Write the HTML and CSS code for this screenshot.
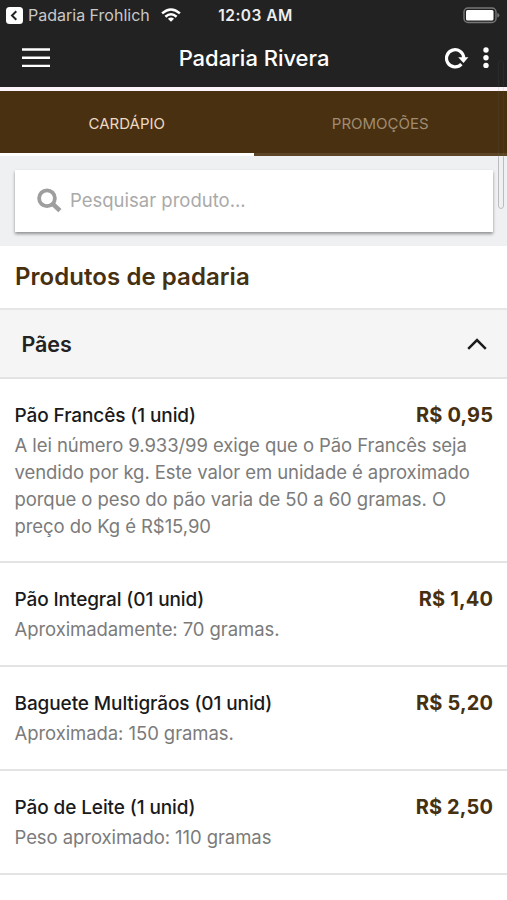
FILE: index.html
```html
<!DOCTYPE html>
<html lang="pt-BR">
<head>
<meta charset="utf-8">
<title>Padaria Rivera</title>
<link rel="stylesheet" href="styles.css">
</head>
<body>
<div class="status">
  <div class="back">
    <svg width="17" height="17" viewBox="0 0 17 17"><rect width="17" height="17" rx="3.5" fill="#fff"/><path d="M10.3 4.2 6 8.5l4.3 4.3" fill="none" stroke="#222" stroke-width="2"/></svg>
    <span class="back-label">Padaria Frohlich</span>
    <svg class="wifi" width="20" height="14" viewBox="0 0 20 14"><g fill="none" stroke="#fff" stroke-width="2.5"><path d="M1.1 5.4Q10-2.4 18.9 5.4"/><path d="M4.4 8.7Q10 3.8 15.6 8.7"/></g><path d="M6.9 10.7Q10 8.2 13.1 10.7L10 13.8Z" fill="#fff"/></svg>
  </div>
  <span class="clock">12:03 AM</span>
  <svg class="battery" width="37" height="17" viewBox="0 0 37 17"><rect x="1" y="1" width="32" height="14.5" rx="4" fill="none" stroke="#777" stroke-width="1.4"/><rect x="3" y="3" width="27.5" height="10.5" rx="1.5" fill="#fff"/><path d="M34.3 6q2 .5 2 2.2t-2 2.3Z" fill="#777"/></svg>
</div>
<header class="bar">
  <svg width="28" height="20" viewBox="0 0 28 20"><path d="M0 1.5h28M0 9.7h28M0 17.9h28" stroke="#fff" stroke-width="2.4"/></svg>
  <h1 class="app-title">Padaria Rivera</h1>
  <div class="actions">
    <svg width="24" height="22" viewBox="0 0 24 22"><path d="M16.4 17.2A8.6 8.6 0 1 1 18.7 11" fill="none" stroke="#fff" stroke-width="3.2"/><path d="M13.2 10.2h10.2L18.5 15.9Z" fill="#fff"/></svg>
    <svg class="dots" width="6" height="22" viewBox="0 0 6 22"><g fill="#fff"><circle cx="3" cy="3" r="2.7"/><circle cx="3" cy="10.7" r="2.7"/><circle cx="3" cy="18.4" r="2.7"/></g></svg>
  </div>
</header>
<nav class="tabs">
  <a class="tab active">CARDÁPIO</a>
  <a class="tab">PROMOÇÕES</a>
</nav>
<div class="scrollbar"></div>
<section class="search">
  <div class="field">
    <svg width="25" height="25" viewBox="0 0 25 25"><circle cx="10" cy="10.3" r="7.9" fill="none" stroke="#9e9e9e" stroke-width="3.8"/><path d="M15.5 15.6l7.4 7" stroke="#9e9e9e" stroke-width="4.6"/></svg>
    <span class="placeholder">Pesquisar produto...</span>
  </div>
</section>
<h2 class="category">Produtos de padaria</h2>
<div class="group">
  <h3 class="group-name">Pães</h3>
  <svg width="20" height="12" viewBox="0 0 20 12"><path d="M1.2 10.8 10 2l8.8 8.8" fill="none" stroke="#1b1b1b" stroke-width="2.5"/></svg>
</div>
<main>
  <article class="item">
    <div class="row"><span class="name">Pão Francês (1 unid)</span><span class="price">R$ 0,95</span></div>
    <p class="desc">A lei número 9.933/99 exige que o Pão Francês seja<br>vendido por kg. Este valor em unidade é aproximado<br>porque o peso do pão varia de 50 a 60 gramas. O<br>preço do Kg é R$15,90</p>
  </article>
  <article class="item">
    <div class="row"><span class="name">Pão Integral (01 unid)</span><span class="price">R$ 1,40</span></div>
    <p class="desc">Aproximadamente: 70 gramas.</p>
  </article>
  <article class="item">
    <div class="row"><span class="name">Baguete Multigrãos (01 unid)</span><span class="price">R$ 5,20</span></div>
    <p class="desc">Aproximada: 150 gramas.</p>
  </article>
  <article class="item">
    <div class="row"><span class="name">Pão de Leite (1 unid)</span><span class="price">R$ 2,50</span></div>
    <p class="desc">Peso aproximado: 110 gramas</p>
  </article>
</main>
</body>
</html>
```

FILE: styles.css
```css
* { box-sizing: border-box; }
body {
  margin: 0;
  width: 507px;
  height: 900px;
  overflow: hidden;
  position: relative;
  background: #fff;
  font-family: Inter, "Liberation Sans", sans-serif;
}
svg { display: block; flex: none; }
h1, h2, h3, p { margin: 0; }
.status {
  display: grid;
  grid-template-columns: 1fr auto 1fr;
  align-items: center;
  height: 30px;
  padding: 0 7px 0 6px;
  background: #222;
  color: #fff;
}
.back { display: flex; align-items: center; }
.back-label { margin-left: 5px; font-size: 16px; color: #c9c9c9; white-space: nowrap; }
.wifi { margin-left: 11px; }
.clock { margin-left: 5px; font-size: 15.5px; font-weight: 600; letter-spacing: 0.45px; color: #eee; }
.battery { justify-self: end; }
.bar {
  display: grid;
  grid-template-columns: 1fr auto 1fr;
  align-items: center;
  height: 57px;
  padding: 0 18px 2px 22px;
  background: #222;
}
.app-title { color: #fff; font-size: 22px; line-height: 28px; font-weight: 500; letter-spacing: -0.03px; margin-right: 3px; }
.actions { display: flex; justify-content: flex-end; gap: 14.5px; }
.tabs {
  display: flex;
  height: 69px;
  border-top: 4px solid #fbf5fa;
  background: #493011;
}
.tab {
  flex: 1;
  display: flex;
  align-items: center;
  justify-content: center;
  border-bottom: 3px solid #5b4526;
  font-size: 15px;
  padding-top: 3px;
  color: #a08c70;
}
.tab.active { color: #ecd9c3; border-bottom-color: #fff; }
.search { height: 90px; padding: 14px 14px 0 15px; background: #eff0f2; }
.field {
  display: flex;
  align-items: center;
  height: 62px;
  padding: 0 22px 2px;
  background: #fff;
  box-shadow: 0 2px 3px rgba(0, 0, 0, .4);
}
.placeholder { margin: -1px 0 0 8px; font-size: 18.5px; color: #aaa; }
.category {
  height: 62px;
  padding-left: 15px;
  font-size: 24px;
  line-height: 62px;
  font-weight: 600;
  letter-spacing: 0.06px;
  color: #46300f;
}
.group {
  display: flex;
  align-items: center;
  justify-content: space-between;
  height: 71px;
  padding: 0 20px 0 21.5px;
  background: #f5f5f5;
  border-top: 2px solid #e6e6e6;
  border-bottom: 2px solid #e3e3e3;
}
.group-name { font-size: 21.5px; font-weight: 600; letter-spacing: -0.1px; color: #222; }
.item {
  min-height: 104px;
  padding: 22px 14px 21px 14.5px;
  border-bottom: 2px solid #e4e4e4;
}
.row { display: flex; justify-content: space-between; height: 31px; line-height: 29px; }
.name { font-size: 19px; font-weight: 500; letter-spacing: -0.1px; color: #1a1a1a; }
.price { font-size: 20px; font-weight: 700; letter-spacing: 0.15px; margin-right: -0.15px; color: #46300f; }
.desc { font-size: 18.5px; line-height: 27px; letter-spacing: -0.07px; color: #7b7b7b; white-space: nowrap; }
.scrollbar {
  position: absolute;
  left: 498px;
  top: 60px;
  width: 6px;
  height: 149px;
  border: 1px solid rgba(110, 110, 110, .4);
  border-radius: 3px;
  -webkit-mask-image: linear-gradient(rgba(0, 0, 0, .3) 62%, #000 66%);
  mask-image: linear-gradient(rgba(0, 0, 0, .3) 62%, #000 66%);
}
```
